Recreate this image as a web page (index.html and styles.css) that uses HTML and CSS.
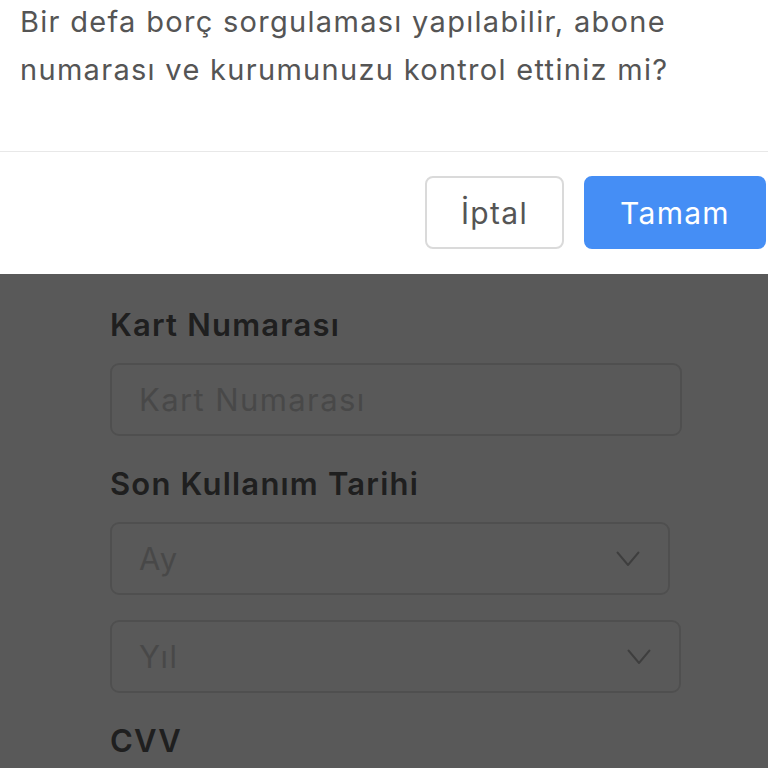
FILE: index.html
```html
<!DOCTYPE html>
<html lang="tr">
<head>
<meta charset="utf-8">
<title>Ödeme</title>
<link rel="stylesheet" href="styles.css">
</head>
<body>
  <main class="page">
    <form class="card-form">
      <label class="field-label" for="card">Kart Numarası</label>
      <input class="field-input" id="card" type="text" placeholder="Kart Numarası">

      <label class="field-label gap-top">Son Kullanım Tarihi</label>
      <div class="select select-month">
        <span class="select-value">Ay</span>
        <svg class="chevron" viewBox="0 0 24 16" width="24" height="16"><polyline points="1.5,1.5 12,14 22.5,1.5"/></svg>
      </div>
      <div class="select select-year">
        <span class="select-value">Yıl</span>
        <svg class="chevron" viewBox="0 0 24 16" width="24" height="16"><polyline points="1.5,1.5 12,14 22.5,1.5"/></svg>
      </div>

      <label class="field-label gap-top">CVV</label>
    </form>
  </main>

  <div class="backdrop"></div>

  <div class="dialog" role="dialog">
    <p class="dialog-text">Bir defa borç sorgulaması yapılabilir, abone numarası ve kurumunuzu kontrol ettiniz mi?</p>
    <div class="dialog-actions">
      <button class="btn btn-cancel" type="button">İptal</button>
      <button class="btn btn-ok" type="button">Tamam</button>
    </div>
  </div>
</body>
</html>
```

FILE: styles.css
```css
* {
  box-sizing: border-box;
}

html, body {
  margin: 0;
  padding: 0;
  background: #ffffff;
  font-family: Inter, Roboto, "Noto Sans", "Liberation Sans", sans-serif;
  overflow: hidden;
}

.page {
  padding: 305px 0 0 110px;
}

.card-form {
  display: flex;
  flex-direction: column;
  align-items: flex-start;
}

.field-label {
  display: block;
  font-size: 31px;
  line-height: 40px;
  font-weight: 600;
  letter-spacing: 1.2px;
  color: #5a5a5a;
  margin-bottom: 18px;
}

.gap-top {
  margin-top: 28px;
}

.field-input,
.select {
  height: 73px;
  border: 2px solid #e2e2e2;
  border-radius: 9px;
  background: #ffffff;
  font-family: inherit;
  font-size: 31px;
  letter-spacing: 1.4px;
  padding: 0 0 0 27px;
  color: #cfcfcf;
}

.field-input {
  width: 572px;
  outline: none;
}

.field-input::placeholder {
  color: #cfcfcf;
}

.select {
  display: flex;
  align-items: center;
  justify-content: space-between;
  padding-right: 28px;
}

.select-month {
  width: 560px;
}

.select-year {
  width: 571px;
  margin-top: 25px;
}

.chevron {
  fill: none;
  stroke: #b3b3b3;
  stroke-width: 2;
  stroke-linecap: round;
  stroke-linejoin: round;
}

.backdrop {
  position: fixed;
  inset: 0;
  background: rgba(0, 0, 0, 0.65);
}

.dialog {
  position: fixed;
  top: 0;
  left: 0;
  right: 0;
  height: 274px;
  background: #ffffff;
  display: flex;
  flex-direction: column;
}

.dialog-text {
  margin: -2px 0 0;
  padding: 0 30px 0 20px;
  height: 154px;
  font-size: 29px;
  line-height: 48px;
  letter-spacing: 1.3px;
  color: #555555;
  border-bottom: 1px solid #e8e8e8;
}

.dialog-actions {
  display: flex;
  justify-content: flex-end;
  gap: 20px;
  padding: 24px 2px 0 0;
}

.btn {
  height: 73px;
  border-radius: 8px;
  font-family: inherit;
  font-size: 30px;
  letter-spacing: 1.3px;
  cursor: pointer;
}

.btn-cancel {
  width: 139px;
  background: #ffffff;
  border: 2px solid #dadada;
  color: #555555;
}

.btn-ok {
  width: 182px;
  background: #458ef5;
  border: none;
  color: #ffffff;
}
```
